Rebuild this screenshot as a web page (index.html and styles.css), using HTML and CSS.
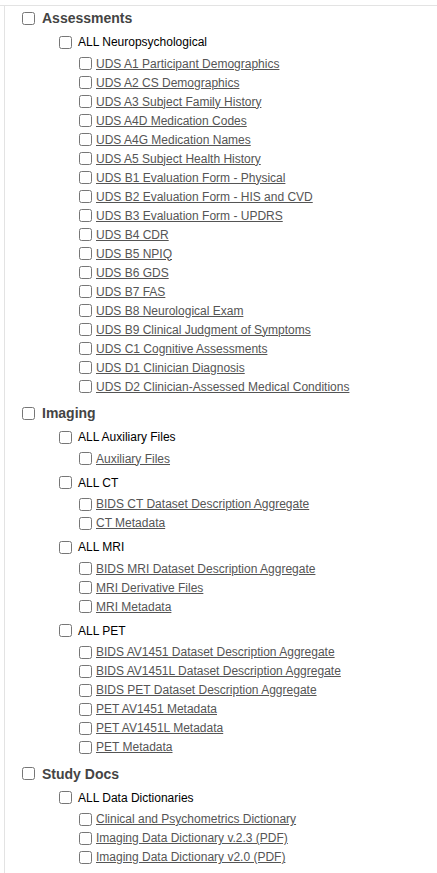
FILE: index.html
```html
<!DOCTYPE html>
<html lang="en">
<head>
<meta charset="utf-8">
<title>Study Data</title>
<link rel="stylesheet" href="styles.css">
</head>
<body>
<div class="panel">
  <div class="tree">
    <div class="group">
      <label class="row l1"><input type="checkbox"><span>Assessments</span></label>
      <div class="sub">
        <label class="row l2"><input type="checkbox"><span>ALL Neuropsychological</span></label>
        <ul class="items">
          <li class="row l3"><input type="checkbox"><a href="#">UDS A1 Participant Demographics</a></li>
          <li class="row l3"><input type="checkbox"><a href="#">UDS A2 CS Demographics</a></li>
          <li class="row l3"><input type="checkbox"><a href="#">UDS A3 Subject Family History</a></li>
          <li class="row l3"><input type="checkbox"><a href="#">UDS A4D Medication Codes</a></li>
          <li class="row l3"><input type="checkbox"><a href="#">UDS A4G Medication Names</a></li>
          <li class="row l3"><input type="checkbox"><a href="#">UDS A5 Subject Health History</a></li>
          <li class="row l3"><input type="checkbox"><a href="#">UDS B1 Evaluation Form - Physical</a></li>
          <li class="row l3"><input type="checkbox"><a href="#">UDS B2 Evaluation Form - HIS and CVD</a></li>
          <li class="row l3"><input type="checkbox"><a href="#">UDS B3 Evaluation Form - UPDRS</a></li>
          <li class="row l3"><input type="checkbox"><a href="#">UDS B4 CDR</a></li>
          <li class="row l3"><input type="checkbox"><a href="#">UDS B5 NPIQ</a></li>
          <li class="row l3"><input type="checkbox"><a href="#">UDS B6 GDS</a></li>
          <li class="row l3"><input type="checkbox"><a href="#">UDS B7 FAS</a></li>
          <li class="row l3"><input type="checkbox"><a href="#">UDS B8 Neurological Exam</a></li>
          <li class="row l3"><input type="checkbox"><a href="#">UDS B9 Clinical Judgment of Symptoms</a></li>
          <li class="row l3"><input type="checkbox"><a href="#">UDS C1 Cognitive Assessments</a></li>
          <li class="row l3"><input type="checkbox"><a href="#">UDS D1 Clinician Diagnosis</a></li>
          <li class="row l3"><input type="checkbox"><a href="#">UDS D2 Clinician-Assessed Medical Conditions</a></li>
        </ul>
      </div>
    </div>

    <div class="group">
      <label class="row l1"><input type="checkbox"><span>Imaging</span></label>
      <div class="sub">
        <label class="row l2"><input type="checkbox"><span>ALL Auxiliary Files</span></label>
        <ul class="items">
          <li class="row l3"><input type="checkbox"><a href="#">Auxiliary Files</a></li>
        </ul>
      </div>
      <div class="sub">
        <label class="row l2"><input type="checkbox"><span>ALL CT</span></label>
        <ul class="items">
          <li class="row l3"><input type="checkbox"><a href="#">BIDS CT Dataset Description Aggregate</a></li>
          <li class="row l3"><input type="checkbox"><a href="#">CT Metadata</a></li>
        </ul>
      </div>
      <div class="sub">
        <label class="row l2"><input type="checkbox"><span>ALL MRI</span></label>
        <ul class="items">
          <li class="row l3"><input type="checkbox"><a href="#">BIDS MRI Dataset Description Aggregate</a></li>
          <li class="row l3"><input type="checkbox"><a href="#">MRI Derivative Files</a></li>
          <li class="row l3"><input type="checkbox"><a href="#">MRI Metadata</a></li>
        </ul>
      </div>
      <div class="sub">
        <label class="row l2"><input type="checkbox"><span>ALL PET</span></label>
        <ul class="items">
          <li class="row l3"><input type="checkbox"><a href="#">BIDS AV1451 Dataset Description Aggregate</a></li>
          <li class="row l3"><input type="checkbox"><a href="#">BIDS AV1451L Dataset Description Aggregate</a></li>
          <li class="row l3"><input type="checkbox"><a href="#">BIDS PET Dataset Description Aggregate</a></li>
          <li class="row l3"><input type="checkbox"><a href="#">PET AV1451 Metadata</a></li>
          <li class="row l3"><input type="checkbox"><a href="#">PET AV1451L Metadata</a></li>
          <li class="row l3"><input type="checkbox"><a href="#">PET Metadata</a></li>
        </ul>
      </div>
    </div>

    <div class="group">
      <label class="row l1"><input type="checkbox"><span>Study Docs</span></label>
      <div class="sub">
        <label class="row l2"><input type="checkbox"><span>ALL Data Dictionaries</span></label>
        <ul class="items">
          <li class="row l3"><input type="checkbox"><a href="#">Clinical and Psychometrics Dictionary</a></li>
          <li class="row l3"><input type="checkbox"><a href="#">Imaging Data Dictionary v.2.3 (PDF)</a></li>
          <li class="row l3"><input type="checkbox"><a href="#">Imaging Data Dictionary v2.0 (PDF)</a></li>
        </ul>
      </div>
    </div>
  </div>
</div>
</body>
</html>
```

FILE: styles.css
```css
html, body {
  margin: 0;
  padding: 0;
  background: #ffffff;
}

body {
  font-family: "Liberation Sans", Arial, sans-serif;
  font-size: 12px;
  color: #000;
}

.panel {
  margin-top: 5px;
  border-top: 1px solid #e3e3e3;
}

.tree {
  margin-left: 4px;
  border-left: 1px solid #e3e3e3;
  padding-left: 17px;
  min-height: calc(100vh - 6px);
  box-sizing: border-box;
}

.group {
  padding-bottom: 2.5px;
}

.row {
  display: flex;
  align-items: center;
}

.row input {
  margin: 0;
  width: 13px;
  height: 13px;
  flex: none;
}

.l1 {
  height: 24px;
}

.l1 input {
  margin-right: 7px;
}

.l1 span {
  font-weight: bold;
  font-size: 14px;
  color: #444444;
}

.sub {
  padding-left: 37px;
  padding-bottom: 2.5px;
}

.l2 {
  height: 24px;
}

.l2 input {
  margin-right: 6px;
}

.l2 span {
  font-size: 12px;
  color: #000000;
}

.items {
  list-style: none;
  margin: 0;
  padding: 0 0 0 20px;
}

.l3 {
  height: 19px;
}

.l3 input {
  margin-right: 4px;
}

.l3 a {
  font-size: 12px;
  color: #555555;
  text-decoration: underline;
}
```
